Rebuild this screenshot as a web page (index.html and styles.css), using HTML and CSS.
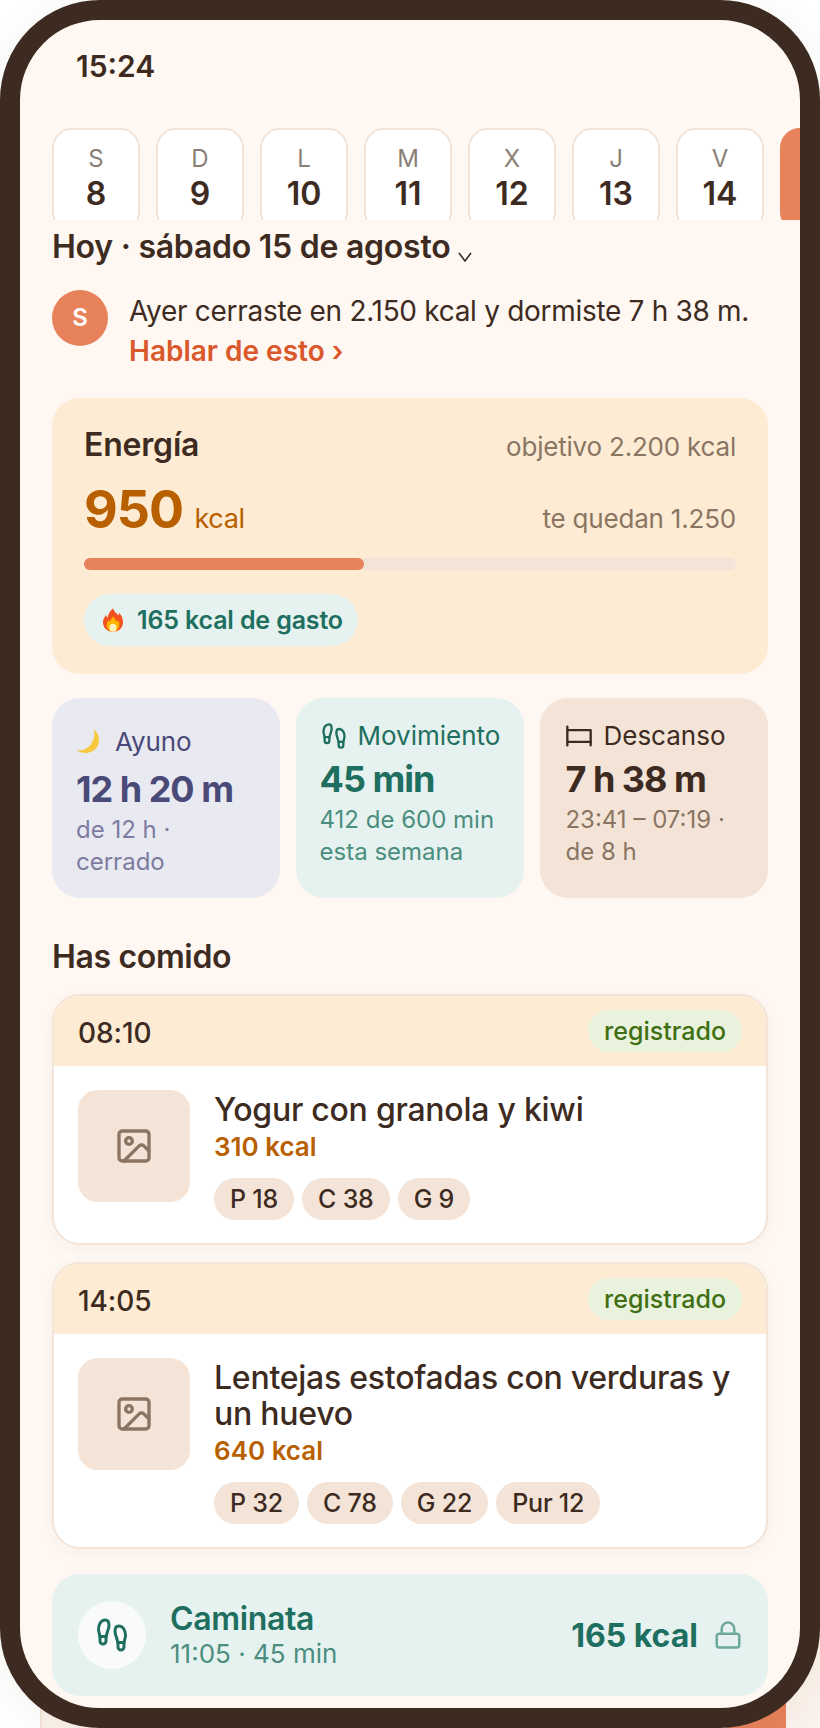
FILE: index.html
```html
<!DOCTYPE html>
<html lang="es">
<head>
    <meta charset="utf-8">
    <title>Hoy</title>
    <link rel="stylesheet" href="styles.css">
</head>
<body>
    <div class="peek"><div class="peek-tab"></div></div>

    <div class="phone">
        <div class="screen">
            <div class="status">15:24</div>

            <div class="days">
                <div class="day"><span class="day-letter">S</span><span class="day-num">8</span></div>
                <div class="day"><span class="day-letter">D</span><span class="day-num">9</span></div>
                <div class="day"><span class="day-letter">L</span><span class="day-num">10</span></div>
                <div class="day"><span class="day-letter">M</span><span class="day-num">11</span></div>
                <div class="day"><span class="day-letter">X</span><span class="day-num">12</span></div>
                <div class="day"><span class="day-letter">J</span><span class="day-num">13</span></div>
                <div class="day"><span class="day-letter">V</span><span class="day-num">14</span></div>
                <div class="day day-today"></div>
            </div>

            <div class="content">
                <h1 class="date">Hoy · sábado 15 de agosto
                    <svg class="chevron" viewBox="0 0 14 10"><path d="M1 1l6 8 6-8"/></svg>
                </h1>

                <div class="insight">
                    <div class="avatar">S</div>
                    <p class="insight-text">Ayer cerraste en 2.150 kcal y dormiste 7 h 38 m.<br>
                        <a class="insight-link">Hablar de esto ›</a></p>
                </div>

                <section class="energy">
                    <div class="energy-row">
                        <h2 class="energy-title">Energía</h2>
                        <span class="energy-note">objetivo 2.200 kcal</span>
                    </div>
                    <div class="energy-row energy-row-main">
                        <span class="energy-value">950 <small>kcal</small></span>
                        <span class="energy-note">te quedan 1.250</span>
                    </div>
                    <div class="bar"><div class="bar-fill" style="width: 43%"></div></div>
                    <div class="burn">
                        <svg class="flame" viewBox="0 0 22 26">
                            <path fill="#f4511e" d="M11 0c1 4 4 5 6 8 .6-1 .8-2 .7-3 3 3 4.300 7 4.300 10.500C22 21.500 17.500 26 11 26S0 21.500 0 15.500C0 12 2 9.500 3.500 7.500c.3 1.500.8 2.500 1.800 3C5.500 6 8 3 11 0z"/>
                            <path fill="#ffb300" d="M11.500 9c.5 2.500 2.500 3.500 4 6 .5-.5.800-1 .9-1.800 1.300 1.500 1.600 3.300 1.600 4.800 0 4.400-3.100 8-7 8s-7-3.600-7-7.500c0-2.500 1.300-4.300 2.500-5.500.2 1 .6 1.600 1.300 2C8.200 13 9.500 11 11.500 9z"/>
                            <ellipse fill="#fff3c4" cx="11" cy="21.500" rx="3.800" ry="4.500"/>
                        </svg>
                        165 kcal de gasto
                    </div>
                </section>

                <div class="stats">
                    <section class="stat stat-fast">
                        <div class="stat-title stat-title-tall">
                            <svg class="moon" viewBox="0 0 26 26">
                                <path fill="#f7c93e" d="M18 1c5 5 6.500 12 3.500 17.500S11 26 5.500 24.500C3.500 24 1.500 22.800 0.500 21.500c4 1.500 9 .5 12.500-3C17.500 14 19.500 7 18 1z"/>
                            </svg>
                            Ayuno
                        </div>
                        <div class="stat-value">12 h 20 m</div>
                        <div class="stat-sub">de 12 h ·<br>cerrado</div>
                    </section>
                    <section class="stat stat-move">
                        <div class="stat-title">
                            <svg class="icon" viewBox="0 0 24 24">
                                <path d="M4 16v-2.380C4 11.500 2.970 10.500 3 8c.03-2.720 1.490-6 4.500-6C9.370 2 10 3.800 10 5.500c0 3.110-2 5.660-2 8.680V16a2 2 0 1 1-4 0Z"/>
                                <path d="M20 20v-2.380c0-2.120 1.030-3.120 1-5.620-.03-2.720-1.490-6-4.500-6C14.630 6 14 7.800 14 9.500c0 3.110 2 5.660 2 8.680V20a2 2 0 1 0 4 0Z"/>
                                <path d="M16 17h4"/><path d="M4 13h4"/>
                            </svg>
                            Movimiento
                        </div>
                        <div class="stat-value">45 min</div>
                        <div class="stat-sub">412 de 600 min<br>esta semana</div>
                    </section>
                    <section class="stat stat-rest">
                        <div class="stat-title">
                            <svg class="icon" viewBox="0 0 24 24">
                                <path d="M2 4v16"/><path d="M2 7h20v13"/><path d="M2 17h20"/>
                            </svg>
                            Descanso
                        </div>
                        <div class="stat-value">7 h 38 m</div>
                        <div class="stat-sub">23:41 – 07:19 ·<br>de 8 h</div>
                    </section>
                </div>

                <h2 class="section-title">Has comido</h2>

                <article class="meal">
                    <header class="meal-head">
                        <span class="meal-time">08:10</span>
                        <span class="meal-badge">registrado</span>
                    </header>
                    <div class="meal-body">
                        <div class="thumb">
                            <svg class="thumb-icon" viewBox="0 0 24 24">
                                <rect x="3" y="3" width="18" height="18" rx="2"/>
                                <circle cx="9" cy="9" r="2"/>
                                <path d="m21 15-3.086-3.086a2 2 0 0 0-2.828 0L6 21"/>
                            </svg>
                        </div>
                        <div class="meal-info">
                            <h3 class="meal-name">Yogur con granola y kiwi</h3>
                            <div class="meal-kcal">310 kcal</div>
                            <div class="chips">
                                <span class="chip">P 18</span>
                                <span class="chip">C 38</span>
                                <span class="chip">G 9</span>
                            </div>
                        </div>
                    </div>
                </article>

                <article class="meal">
                    <header class="meal-head">
                        <span class="meal-time">14:05</span>
                        <span class="meal-badge">registrado</span>
                    </header>
                    <div class="meal-body">
                        <div class="thumb">
                            <svg class="thumb-icon" viewBox="0 0 24 24">
                                <rect x="3" y="3" width="18" height="18" rx="2"/>
                                <circle cx="9" cy="9" r="2"/>
                                <path d="m21 15-3.086-3.086a2 2 0 0 0-2.828 0L6 21"/>
                            </svg>
                        </div>
                        <div class="meal-info">
                            <h3 class="meal-name">Lentejas estofadas con verduras y un huevo</h3>
                            <div class="meal-kcal">640 kcal</div>
                            <div class="chips">
                                <span class="chip">P 32</span>
                                <span class="chip">C 78</span>
                                <span class="chip">G 22</span>
                                <span class="chip">Pur 12</span>
                            </div>
                        </div>
                    </div>
                </article>

                <section class="activity">
                    <div class="activity-icon">
                        <svg class="icon" viewBox="0 0 24 24">
                            <path d="M4 16v-2.380C4 11.500 2.970 10.500 3 8c.03-2.720 1.490-6 4.500-6C9.370 2 10 3.800 10 5.500c0 3.110-2 5.660-2 8.680V16a2 2 0 1 1-4 0Z"/>
                            <path d="M20 20v-2.380c0-2.120 1.030-3.120 1-5.620-.03-2.720-1.490-6-4.500-6C14.630 6 14 7.800 14 9.500c0 3.110 2 5.660 2 8.680V20a2 2 0 1 0 4 0Z"/>
                            <path d="M16 17h4"/><path d="M4 13h4"/>
                        </svg>
                    </div>
                    <div class="activity-info">
                        <div class="activity-name">Caminata</div>
                        <div class="activity-sub">11:05 · 45 min</div>
                    </div>
                    <div class="activity-kcal">165 kcal</div>
                    <svg class="lock" viewBox="0 0 24 24">
                        <rect x="3" y="11" width="18" height="11" rx="2"/>
                        <path d="M7 11V7a5 5 0 0 1 10 0v4"/>
                    </svg>
                </section>
            </div>
        </div>
    </div>
</body>
</html>
```

FILE: styles.css
```css
* {
    box-sizing: border-box;
}

html, body {
    margin: 0;
    height: 1728px;
    overflow: hidden;
    background-color: #ffffff;
}

body {
    position: relative;
    font-family: Inter, "Noto Sans", sans-serif;
    color: #3d2b22;
}

h1, h2, h3, p {
    margin: 0;
}

/* panel that sticks out under the phone */
.peek {
    position: absolute;
    left: 40px;
    right: -10px;
    top: 1640px;
    height: 100px;
    background-color: #fbf2eb;
    border-left: 2px solid #f3e4d7;
}

.peek-tab {
    position: absolute;
    left: 684px;
    top: 0;
    width: 60px;
    height: 100px;
    background-color: #e8825a;
}

.phone {
    position: relative;
    width: 820px;
    height: 1728px;
    border: 20px solid #3d2b22;
    border-radius: 100px;
    background-color: #fff7f1;
    box-shadow: 0 6px 40px rgba(61, 43, 34, 0.06);
    overflow: hidden;
}

.screen {
    height: 100%;
    overflow: hidden;
}

.status {
    height: 108px;
    padding: 29px 0 0 56px;
    font-size: 30px;
    line-height: 34px;
    font-weight: 600;
}

.days {
    display: flex;
    gap: 16px;
    height: 92px;
    padding-left: 32px;
    overflow: hidden;
}

.day {
    flex: none;
    display: flex;
    flex-direction: column;
    align-items: center;
    width: 88px;
    height: 104px;
    padding-top: 14px;
    background-color: #ffffff;
    border: 2px solid #f4e4d7;
    border-radius: 20px;
}

.day-letter {
    font-size: 24px;
    line-height: 30px;
    color: #8a7f76;
}

.day-num {
    font-size: 32px;
    line-height: 40px;
    font-weight: 600;
}

.day-today {
    background-color: #e8825a;
    border-color: #e8825a;
}

.content {
    padding: 0 32px;
}

.date {
    margin-top: 7px;
    font-size: 32px;
    line-height: 40px;
    font-weight: 600;
    letter-spacing: -0.25px;
}

.chevron {
    width: 14px;
    height: 10px;
    margin-left: 0;
    vertical-align: -4px;
    fill: none;
    stroke: #3d2b22;
    stroke-width: 1.6;
}

.insight {
    display: flex;
    gap: 21px;
    margin-top: 23px;
}

.avatar {
    flex: none;
    width: 56px;
    height: 56px;
    border-radius: 50%;
    background-color: #e8825a;
    color: #ffffff;
    font-size: 24px;
    line-height: 56px;
    font-weight: 600;
    text-align: center;
}

.insight-text {
    margin-top: 1px;
    font-size: 28px;
    line-height: 40px;
    letter-spacing: -0.3px;
    white-space: nowrap;
}

.insight-link {
    color: #d9582c;
    font-weight: 600;
    letter-spacing: 0;
}

.energy {
    margin-top: 27px;
    height: 276px;
    padding: 29px 32px 0;
    background-color: #fdebd3;
    border-radius: 28px;
}

.energy-row {
    display: flex;
    justify-content: space-between;
    align-items: baseline;
    height: 36px;
    line-height: 36px;
}

.energy-row-main {
    height: 60px;
    margin-top: 17px;
    line-height: 60px;
}

.energy-title {
    font-size: 32px;
    font-weight: 600;
    letter-spacing: -0.2px;
}

.energy-note {
    font-size: 26px;
    line-height: 1;
    letter-spacing: -0.2px;
    color: #8a7563;
}

.energy-value {
    font-size: 52px;
    font-weight: 700;
    letter-spacing: -1px;
    color: #b85f00;
}

.energy-value small {
    font-size: 27px;
    line-height: 1;
    font-weight: 400;
    letter-spacing: -0.3px;
}

.bar {
    height: 12px;
    margin-top: 18px;
    background-color: #f4e4d7;
    border-radius: 6px;
}

.bar-fill {
    height: 100%;
    background-color: #e8825a;
    border-radius: 6px;
}

.burn {
    display: inline-flex;
    align-items: center;
    gap: 14px;
    width: 274px;
    height: 52px;
    margin-top: 24px;
    padding: 0 0 0 19px;
    background-color: #e6f2ef;
    border-radius: 26px;
    color: #1f6f60;
    font-size: 25px;
    font-weight: 600;
    letter-spacing: -0.15px;
    white-space: nowrap;
}

.flame {
    width: 20px;
    height: 24px;
}

.stats {
    display: grid;
    grid-template-columns: repeat(3, 1fr);
    gap: 16px;
    margin-top: 24px;
}

.stat {
    height: 200px;
    padding: 20px 24px;
    border-radius: 28px;
}

.stat-title {
    display: flex;
    align-items: center;
    gap: 10px;
    height: 35px;
    font-size: 26px;
    white-space: nowrap;
}

.stat-title-tall {
    height: 46px;
    gap: 13px;
    letter-spacing: -0.1px;
}

.stat-value {
    margin-top: 4px;
    font-size: 36px;
    line-height: 44px;
    font-weight: 700;
    letter-spacing: -1px;
    white-space: nowrap;
}

.stat-title-tall + .stat-value {
    margin-top: 3px;
}

.stat-sub {
    margin-top: 3px;
    font-size: 24px;
    line-height: 32px;
    white-space: nowrap;
}

.stat-fast {
    background-color: #e9e9f2;
    color: #4a4a78;
}

.stat-fast .stat-sub {
    color: #7c7c9e;
}

.stat-move {
    background-color: #e6f2ef;
    color: #1f6f60;
}

.stat-move .stat-sub {
    color: #4b8e80;
}

.stat-rest {
    padding-left: 25px;
    background-color: #f4e4d7;
}

.stat-rest .stat-sub {
    color: #8a7563;
}

.icon {
    flex: none;
    width: 28px;
    height: 28px;
    fill: none;
    stroke: currentColor;
    stroke-width: 2;
    stroke-linecap: round;
    stroke-linejoin: round;
}

.moon {
    flex: none;
    width: 26px;
    height: 26px;
}

.section-title {
    margin-top: 39px;
    font-size: 32px;
    line-height: 40px;
    font-weight: 600;
    letter-spacing: -0.35px;
}

.meal {
    margin-top: 17px;
    background-color: #ffffff;
    border: 2px solid #f4e4d7;
    border-radius: 28px;
    box-shadow: 0 4px 16px rgba(61, 43, 34, 0.04);
    overflow: hidden;
}

.meal-head {
    display: flex;
    justify-content: space-between;
    align-items: center;
    height: 70px;
    padding: 0 24px;
    background-color: #fdebd3;
}

.meal-time {
    padding-top: 3px;
    font-size: 28px;
    font-weight: 500;
    letter-spacing: -0.1px;
}

.meal-badge {
    padding: 0 16px;
    background-color: #e9f2dd;
    border-radius: 21px;
    color: #3f6f12;
    font-size: 25px;
    line-height: 42px;
    font-weight: 500;
}

.meal-body {
    display: flex;
    gap: 24px;
    padding: 24px 24px 23px;
}

.thumb {
    flex: none;
    display: flex;
    align-items: center;
    justify-content: center;
    width: 112px;
    height: 112px;
    background-color: #f4e4d7;
    border-radius: 20px;
}

.thumb-icon {
    width: 40px;
    height: 40px;
    fill: none;
    stroke: #8a7563;
    stroke-width: 2;
    stroke-linecap: round;
    stroke-linejoin: round;
}

.meal-info {
    padding-top: 2px;
}

.meal-name {
    font-size: 32px;
    line-height: 36px;
    font-weight: 550;
    letter-spacing: -0.25px;
}

.meal-kcal {
    margin-top: 3px;
    font-size: 26px;
    line-height: 32px;
    font-weight: 600;
    color: #b85f00;
}

.chips {
    display: flex;
    gap: 8px;
    margin-top: 15px;
}

.chip {
    padding: 0 16px;
    background-color: #f4e4d7;
    border-radius: 21px;
    font-size: 25px;
    line-height: 42px;
    font-weight: 500;
    letter-spacing: -0.2px;
}

.activity {
    display: flex;
    align-items: center;
    height: 122px;
    margin-top: 25px;
    padding: 0 25px 0 26px;
    background-color: #e6f2ef;
    border-radius: 28px;
    color: #1f6f60;
}

.activity-icon {
    flex: none;
    display: flex;
    align-items: center;
    justify-content: center;
    width: 68px;
    height: 68px;
    background-color: #f9fbfa;
    border-radius: 50%;
}

.activity-icon .icon {
    width: 36px;
    height: 36px;
}

.activity-info {
    flex: 1;
    margin-left: 24px;
}

.activity-name {
    font-size: 32px;
    line-height: 38px;
    font-weight: 600;
    letter-spacing: -0.35px;
}

.activity-sub {
    font-size: 26px;
    line-height: 32px;
    color: #4b8e80;
}

.activity-kcal {
    font-size: 32px;
    font-weight: 700;
}

.lock {
    flex: none;
    width: 30px;
    height: 30px;
    margin-left: 15px;
    fill: none;
    stroke: #6fa89c;
    stroke-width: 2;
    stroke-linecap: round;
    stroke-linejoin: round;
}
```
